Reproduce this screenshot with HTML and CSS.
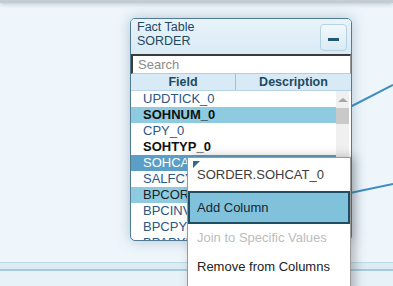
FILE: index.html
```html
<html>
<head>
<meta name="viewport" content="width=device-width, initial-scale=1" />
<title>Fact Table SORDER</title>
<link rel="stylesheet" href="styles.css">
</head>
<body>

<div class="topbar"></div>

<svg class="links" width="393" height="286">
    <line x1="350" y1="107" x2="393" y2="85" />
    <line x1="350" y1="193" x2="393" y2="184" />
</svg>

<div class="band"></div>

<div class="facttable">
    <div class="head">
        <div class="title">Fact Table<br>SORDER</div>
        <button class="minimize"><span></span></button>
    </div>
    <input class="search" type="text" placeholder="Search">
    <div class="cols">
        <div class="col field">Field</div>
        <div class="col">Description</div>
    </div>
    <div class="rows">
        <ul class="list">
            <li>UPDTICK_0</li>
            <li class="key hl">SOHNUM_0</li>
            <li>CPY_0</li>
            <li class="key">SOHTYP_0</li>
            <li class="sel">SOHCAT_0</li>
            <li>SALFCY_0</li>
            <li class="hl dark">BPCORD_0</li>
            <li>BPCINV_0</li>
            <li>BPCPYR_0</li>
            <li>BPAPYR_0</li>
        </ul>
        <div class="scroll">
            <div class="up"></div>
            <div class="thumb"></div>
        </div>
    </div>
</div>

<div class="menu">
    <div class="corner"></div>
    <div class="menutitle">SORDER.SOHCAT_0</div>
    <div class="item active">Add Column</div>
    <div class="item off">Join to Specific Values</div>
    <div class="item last">Remove from Columns</div>
</div>

</body>
</html>
```

FILE: styles.css
```css
body { margin: 0; width: 393px; height: 286px; overflow: hidden; position: relative; background-color: #eef6fc; font-family: "Liberation Sans", Arial, sans-serif; }
.topbar { height: 3px; background-color: #c3cbd3; box-shadow: 0 1px 4px rgba(90, 110, 130, 0.45); }
.links { position: absolute; left: 0; top: 0; }
.links line { stroke: #3f8fbe; stroke-width: 2; }
.band { position: absolute; left: 0; right: 0; top: 262px; height: 6px; background-color: #dcebf4; border-top: 1px solid #bcdbe9; border-bottom: 2px solid #a6cadd; }
.band:after { content: ""; position: absolute; left: 0; right: 0; top: 8px; height: 20px; background-color: #e6f1f8; }

.facttable { position: absolute; left: 130px; top: 18px; width: 220px; height: 221px; border: 1px solid #4f7c93; border-radius: 5px; overflow: hidden; background-color: #fff; box-shadow: 0 0 14px rgba(70, 100, 130, 0.35); display: flex; flex-direction: column; }
.head { height: 35px; display: flex; justify-content: space-between; background: linear-gradient(#e9f3fa, #d9eaf5); }
.title { padding: 1px 0 0 6px; font-size: 12.5px; line-height: 14px; color: #1d4962; }
.minimize { margin: 5px 4px 0 0; width: 27px; height: 27px; border: 1px solid #b5d2e3; border-radius: 4px; background: linear-gradient(#f1f8fc, #dbeaf4); padding: 0; display: flex; align-items: center; justify-content: center; }
.minimize span { display: block; width: 11px; height: 3px; margin-top: 4px; background-color: #235b75; }
.search { height: 20px; margin: 0; border: 2px solid #3b3b3b; border-right: 1px solid #9a9a9a; border-bottom: 1px solid #c8c8c8; padding: 0 5px; font-family: inherit; font-size: 13px; color: #333; outline: none; }
.search::placeholder { color: #8a8a8a; }
.cols { height: 16px; display: flex; background-color: #d7eaf6; border-bottom: 1px solid #b8d5e6; }
.col { flex: 1; text-align: center; font-size: 12.5px; font-weight: bold; line-height: 16px; color: #1d4a63; }
.col.field { flex: 0 0 104px; border-right: 1px solid #9fc1d6; }
.rows { flex: 1; display: flex; overflow: hidden; }
.list { flex: 1; margin: 0; padding: 0; list-style: none; }
.list li { height: 16px; line-height: 16px; padding-left: 12px; font-size: 13px; color: #2b5786; white-space: nowrap; }
.list li.key { font-weight: bold; color: #111; }
.list li.hl { background-color: #8ecbe0; }
.list li.dark { color: #1a1f2b; }
.list li.sel { background-color: #5b9fc6; color: #fff; }
.scroll { width: 13px; margin-right: 2px; background-color: #f0f0f0; }
.scroll .up { width: 0; height: 0; margin: 7px auto 6px; border-left: 5px solid transparent; border-right: 5px solid transparent; border-bottom: 4px solid #a6a6a6; }
.scroll .thumb { height: 16px; background-color: #c9c9c9; }

.menu { position: absolute; left: 187px; top: 157px; width: 162px; height: 140px; border: 1px solid #9a9a9a; background-color: #fff; box-shadow: 4px 0 10px rgba(60, 60, 60, 0.35); }
.corner { position: absolute; left: 5px; top: 3px; width: 0; height: 0; border-top: 7px solid #2b6d8e; border-right: 7px solid transparent; }
.menutitle { height: 33px; line-height: 34px; padding-left: 9px; font-size: 13px; color: #3c3c3c; }
.item { height: 27px; line-height: 27px; padding-left: 9px; font-size: 13px; color: #222; }
.item.active { height: 29px; line-height: 30px; padding-left: 7px; border: 2px solid #1f4e62; background-color: #80c2dc; color: #16252d; }
.item.off { color: #bdbdbd; }
.item.last { height: 32px; line-height: 32px; }
```
